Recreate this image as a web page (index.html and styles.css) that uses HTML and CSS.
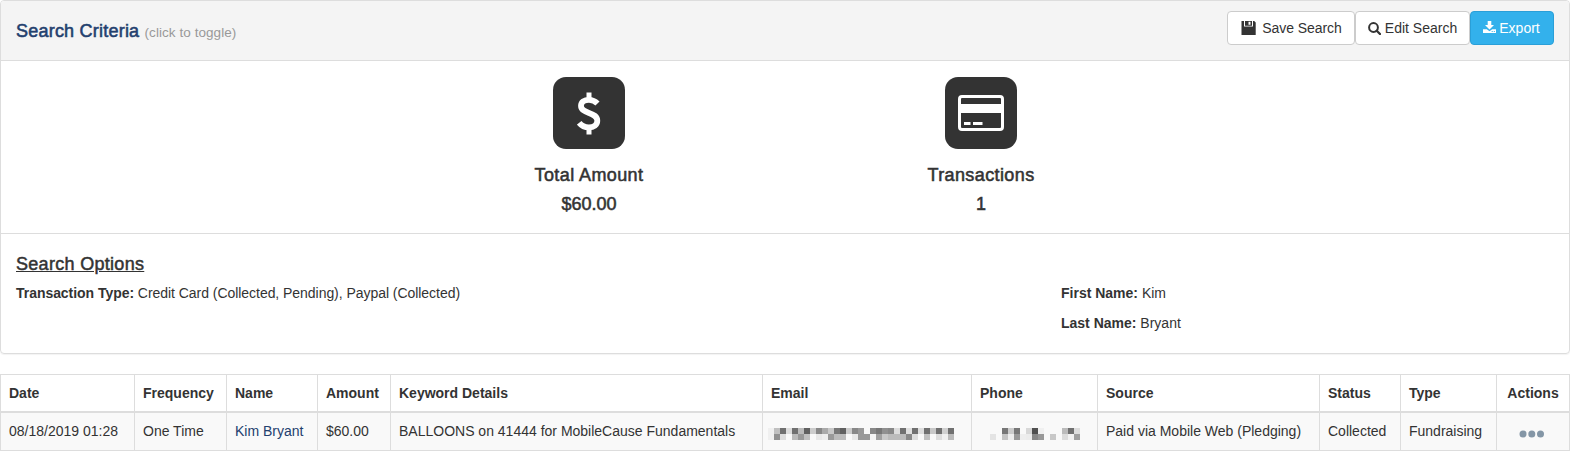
FILE: index.html
```
<!DOCTYPE html>
<html lang="en">
<head>
<meta charset="utf-8">
<title>Transactions</title>
<link rel="stylesheet" href="styles.css">
</head>
<body>
<section class="panel">
  <header class="panel-head">
    <h4 class="panel-title">Search Criteria <small>(click to toggle)</small></h4>
    <div class="buttons">
      <button class="btn btn-save"><svg width="15" height="14" viewBox="0 0 15 14"><path fill="#333" fill-rule="evenodd" d="M.5 0H3v5.500h9V0h1.200L14.700 1.500V14H.5zM4 0h7v4.700H4zM7.500.8v3h2v-3z"/></svg><span>Save Search</span></button>
      <button class="btn btn-edit"><svg width="13" height="13" viewBox="0 0 13 13"><circle cx="5.500" cy="5.500" r="4.400" fill="none" stroke="#333" stroke-width="2"/><path d="M8.700 8.700l3.300 3.300" stroke="#333" stroke-width="2.300" stroke-linecap="round"/></svg><span>Edit Search</span></button>
      <button class="btn btn-export"><svg width="13" height="12" viewBox="0 0 13 12"><path fill="#fff" fill-rule="evenodd" d="M4.700 0h3.600v4h2.700L6.500 8.500 2 4h2.700zM0 8.300h3.800L6.500 10.300 9.200 8.300H13V12H0zM8.700 10v1h1v-1zM10.800 10v1h1v-1z"/></svg><span>Export</span></button>
    </div>
  </header>
  <div class="stats">
    <div class="stat">
      <div class="tile"><svg width="24" height="43" viewBox="0 0 24 43"><path d="M12 .5v6M12 36.500v6" stroke="#fff" stroke-width="5"/><path d="M20.500 11.500C18 9 15.300 7.800 12 7.800c-4.700 0-8 2.200-8 5.900 0 4.200 3.600 5.600 8 7.200 4.800 1.700 8.300 3.400 8.300 7.900 0 4.200-3.600 6.500-8.400 6.500-4.200 0-7.400-1.600-9.700-4.500" fill="none" stroke="#fff" stroke-width="5.800"/></svg></div>
      <h4 class="stat-text stat-label">Total Amount</h4>
      <h4 class="stat-text">$60.00</h4>
    </div>
    <div class="stat">
      <div class="tile"><svg width="46" height="36" viewBox="0 0 46 36"><rect x="1.500" y="1.500" width="43" height="33" rx="2.500" fill="none" stroke="#fff" stroke-width="3"/><path fill="#fff" d="M2 9h42v9H2zM6 27h6.500v3H6zM15 27h9.500v3H15z"/></svg></div>
      <h4 class="stat-text stat-label">Transactions</h4>
      <h4 class="stat-text">1</h4>
    </div>
  </div>
  <div class="options">
    <h4 class="options-title">Search Options</h4>
    <div class="options-grid">
      <p class="wide-text"><b>Transaction Type:</b> Credit Card (Collected, Pending), Paypal (Collected)</p>
      <div>
        <p><b>First Name:</b> Kim</p>
        <p><b>Last Name:</b> Bryant</p>
      </div>
    </div>
  </div>
</section>
<table class="results">
  <colgroup><col class="c-date"><col class="c-freq"><col class="c-name"><col class="c-amount"><col class="c-keyword"><col class="c-email"><col class="c-phone"><col class="c-source"><col class="c-status"><col class="c-type"><col class="c-actions"></colgroup>
  <thead><tr><th>Date</th><th>Frequency</th><th>Name</th><th>Amount</th><th>Keyword Details</th><th>Email</th><th>Phone</th><th>Source</th><th>Status</th><th>Type</th><th class="center">Actions</th></tr></thead>
  <tbody><tr>
    <td>08/18/2019 01:28</td><td>One Time</td><td><a class="name">Kim Bryant</a></td><td>$60.00</td><td>BALLOONS on 41444 for MobileCause Fundamentals</td>
    <td><svg class="mask mask-email" width="186" height="12" viewBox="0 0 31 2" shape-rendering="crispEdges"></svg></td>
    <td><svg class="mask mask-phone" width="90" height="12" viewBox="0 0 15 2" shape-rendering="crispEdges"></svg></td>
    <td>Paid via Mobile Web (Pledging)</td><td>Collected</td><td>Fundraising</td>
    <td class="center"><svg class="dots" width="26" height="8" viewBox="0 0 26 8"><g fill="#8496a6"><circle cx="4" cy="4" r="3.500"/><circle cx="12.800" cy="4" r="3.500"/><circle cx="21.500" cy="4" r="3.500"/></g></svg></td>
  </tr></tbody>
</table>
<script src="mask.js"></script>
</body>
</html>
```
FILE: mask.js
```
// Pixelated masks over private values: two hex digits per cell, ".." is empty.
const masks = {
  '.mask-email': [
    'f0c070dd70bb60cc88aac87760cc8899..88779088dd70e070dd70c870d070',
    'f090dd..bb99c0..e8ee99bbbb..e89999f5a0c8bbbbbb88dd..c0..ddf0bb'
  ],
  '.mask-phone': [
    '....77cc77..d850f0......bb70dd',
    'e4..c4ee99eeec8899..c8..dcf2a0'
  ]
};
for (const [selector, rows] of Object.entries(masks)) {
  const svg = document.querySelector(selector);
  rows.forEach((row, y) => row.match(/../g).forEach((v, x) => {
    if (v === '..') return;
    const r = document.createElementNS('http://www.w3.org/2000/svg', 'rect');
    r.setAttribute('x', x);
    r.setAttribute('y', y);
    r.setAttribute('width', 1);
    r.setAttribute('height', 1);
    r.setAttribute('fill', '#' + v + v + v);
    svg.appendChild(r);
  }));
}
```
FILE: styles.css
```
* { box-sizing: border-box; }
body { margin: 0; background: #fff; color: #333; font: 14px/20px "Liberation Sans", Arial, sans-serif; overflow: hidden; }
h4, p { margin: 0; }
.panel { height: 354px; border: 1px solid #ddd; border-radius: 4px; box-shadow: 0 1px 1px rgba(0,0,0,.05); }
.panel-head { height: 60px; padding: 10px 15px 15px; display: flex; justify-content: space-between; background: #f4f4f4; border-bottom: 1px solid #ddd; border-radius: 3px 3px 0 0; }
.panel-title { padding-top: 10px; font-size: 18px; line-height: 20px; font-weight: 400; letter-spacing: .22px; color: #23406e; -webkit-text-stroke: .55px #23406e; }
.panel-title small { font-size: 13.5px; letter-spacing: .06px; color: #999; -webkit-text-stroke: 0; }
.buttons { display: flex; }
.btn { height: 34px; padding: 0; display: flex; align-items: center; justify-content: center; border: 1px solid #ccc; border-radius: 4px; background: #fff; color: #333; font: 14px/20px "Liberation Sans", Arial, sans-serif; }
.btn-save { width: 128px; padding-left: 1px; gap: 6px; letter-spacing: -.06px; }
.btn-edit { width: 115px; gap: 4px; }
.btn-export { width: 84px; padding-right: 1px; gap: 3px; color: #fff; background: #33b1ec; border-color: #2a9fd8; }
.btn-export svg { margin-top: -2px; }
.stats { height: 173px; padding: 16px 392px 0; display: grid; grid-template-columns: 1fr 1fr; border-bottom: 1px solid #ddd; }
.stat { display: flex; flex-direction: column; align-items: center; }
.tile { width: 72px; height: 72px; margin-bottom: 16px; display: grid; place-items: center; background: #333; border-radius: 13px; }
.stat-text { height: 20px; margin-bottom: 9px; font-size: 18px; line-height: 20px; font-weight: 400; -webkit-text-stroke: .55px #333; }
.stat-label { letter-spacing: .4px; }
.options { padding: 20px 15px 0; }
.options-title { font-size: 18px; line-height: 20px; font-weight: 400; letter-spacing: .3px; text-decoration: underline; -webkit-text-stroke: .5px #333; margin-bottom: 9px; }
.options-grid { display: grid; grid-template-columns: 1045px 1fr; }
.options-grid p { margin-bottom: 10px; }
.options-grid .wide-text { letter-spacing: -.045px; }
.results { width: 1570px; margin-top: 20px; table-layout: fixed; border-collapse: collapse; }
.results th, .results td { padding: 0 8px; text-align: left; border: 1px solid #ddd; white-space: nowrap; }
.results th { height: 37px; border-bottom-width: 2px; }
.results td { height: 39px; padding-bottom: 1px; background: #f9f9f9; }
.results .center { text-align: center; }
.c-date { width: 134px; } .c-freq { width: 92px; } .c-name { width: 91px; } .c-amount { width: 73px; }
.c-keyword { width: 372px; } .c-email { width: 209px; } .c-phone { width: 126px; } .c-source { width: 222px; }
.c-status { width: 81px; } .c-type { width: 96px; } .c-actions { width: 73px; }
.name { color: #23406e; }
.mask { display: block; margin: 6px 0 0 -3px; }
.mask-phone { margin-left: 10px; }
.dots { display: block; margin: 6px auto 0 14px; }
```
